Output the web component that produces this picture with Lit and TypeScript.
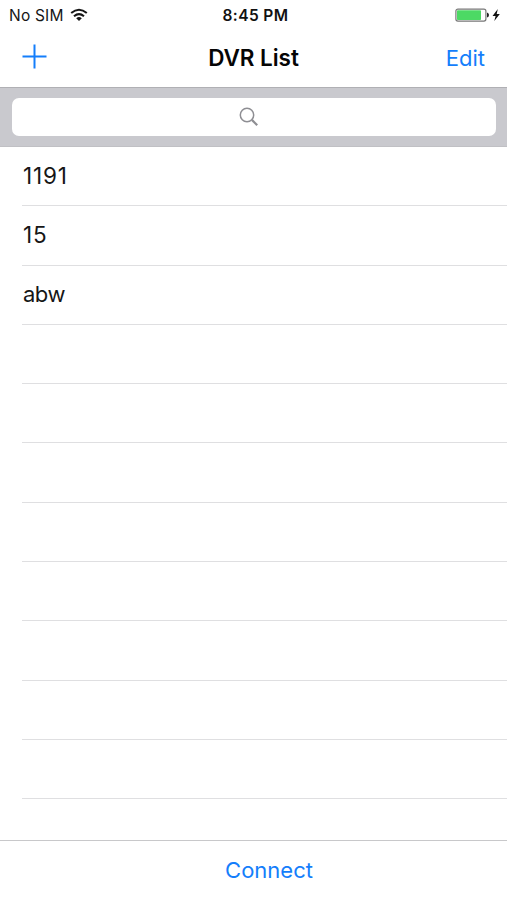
import { LitElement, html, css } from "lit";
import { customElement, state } from "lit/decorators.js";
import { classMap } from "lit/directives/class-map.js";

@customElement("app-root")
export class AppRoot extends LitElement {
  static styles = css`
    :host {
      display: flex;
      flex-direction: column;
      height: 900px;
      overflow: hidden;
      background: #fff;
      color: #161616;
      font-family: Inter, "Liberation Sans", sans-serif;
      font-size: 22px;
    }
    svg { display: block; }
    .status {
      display: grid;
      grid-template-columns: 1fr auto 1fr;
      align-items: center;
      height: 30px;
      box-sizing: border-box;
      padding: 0 6px 0 9px;
      font-size: 15.5px;
      line-height: 31px;
    }
    .status svg { margin-bottom: 2px; }
    .carrier { display: flex; align-items: center; gap: 6px; letter-spacing: 0.2px; }
    .time { font-weight: 600; letter-spacing: 0.4px; color: #111; padding-left: 1px; }
    .power { display: flex; justify-content: flex-end; }
    .nav {
      display: grid;
      grid-template-columns: 1fr auto 1fr;
      align-items: center;
      height: 57px;
      box-sizing: border-box;
      padding: 0 22px;
    }
    .title { font-size: 22.5px; font-weight: 600; color: #050505; letter-spacing: -0.05px; padding-bottom: 2px; }
    .action { color: #147efb; }
    .add { padding-bottom: 5px; }
    .edit { justify-self: end; padding-bottom: 2px; }
    .search {
      height: 60px;
      box-sizing: border-box;
      padding: 10px 11px 10px 12px;
      background: #c9c9ce;
      border-top: 1px solid #b0b0b4;
      border-bottom: 1px solid #c0c0c4;
    }
    .field {
      height: 38px;
      border-radius: 7px;
      background: #fff;
      display: flex;
      align-items: center;
      justify-content: center;
      padding-right: 11px;
    }
    .list { flex: 1; min-height: 0; overflow: hidden; }
    .row {
      height: 59.3px;
      box-sizing: border-box;
      margin-left: 22px;
      padding-left: 1px;
      border-bottom: 1px solid #dfdfe1;
      line-height: 57px;
      letter-spacing: -0.5px;
    }
    .numeric { font-size: 22.5px; line-height: 58px; letter-spacing: 0.8px; }
    .toolbar {
      height: 60px;
      box-sizing: border-box;
      border-top: 1px solid #c8c8ca;
      padding-left: 31px;
      text-align: center;
      line-height: 58px;
      color: #147efb;
    }
  `;

  @state() private rows = ["1191", "15", "abw", "", "", "", "", "", "", "", "", ""];

  render() {
    return html`
      <div class="status">
        <div class="carrier">
          <span>No SIM</span>
          <svg width="18" height="14" viewBox="0 0 18 14" fill="none" stroke="#151515" stroke-width="2">
            <path d="M1.2 5.1Q9-1.6 16.8 5.1" />
            <path d="M4 8.3Q9 3.9 14 8.3" />
            <path d="M9 13L6.2 10.2Q9 7.8 11.8 10.2Z" fill="#151515" stroke="none" />
          </svg>
        </div>
        <div class="time">8:45 PM</div>
        <div class="power">
          <svg width="46" height="14" viewBox="0 0 46 14">
            <rect x="0.9" y="1.1" width="30" height="12" rx="2" fill="#fff" stroke="#777" stroke-width="1.2" />
            <rect x="2" y="2.2" width="24" height="9.8" rx="0.8" fill="#4cd964" />
            <path d="M32 4.4Q34 5 34 7T32 9.6Z" fill="#222" />
            <path d="M42.8 1L37.5 7.9H40.6L39.3 13L44.8 5.9H41.7Z" fill="#111" />
          </svg>
        </div>
      </div>
      <div class="nav">
        <div class="action add">
          <svg width="25" height="25" viewBox="0 0 25 25" stroke="#147efb" stroke-width="2">
            <path d="M12.5 0.5V24.5M0.5 12.5H24.5" />
          </svg>
        </div>
        <div class="title">DVR List</div>
        <div class="action edit">Edit</div>
      </div>
      <div class="search">
        <div class="field">
          <svg width="20" height="20" viewBox="0 0 20 20" fill="none" stroke="#8e8e93">
            <circle cx="8" cy="8" r="6.7" stroke-width="1.5" />
            <path d="M12.9 12.9L18.2 18.2" stroke-width="2.2" />
          </svg>
        </div>
      </div>
      <div class="list">
        ${this.rows.map(
          (name) => html`<div class=${classMap({ row: true, numeric: /^\d+$/.test(name) })}>${name}</div>`
        )}
      </div>
      <div class="toolbar">Connect</div>
    `;
  }
}
